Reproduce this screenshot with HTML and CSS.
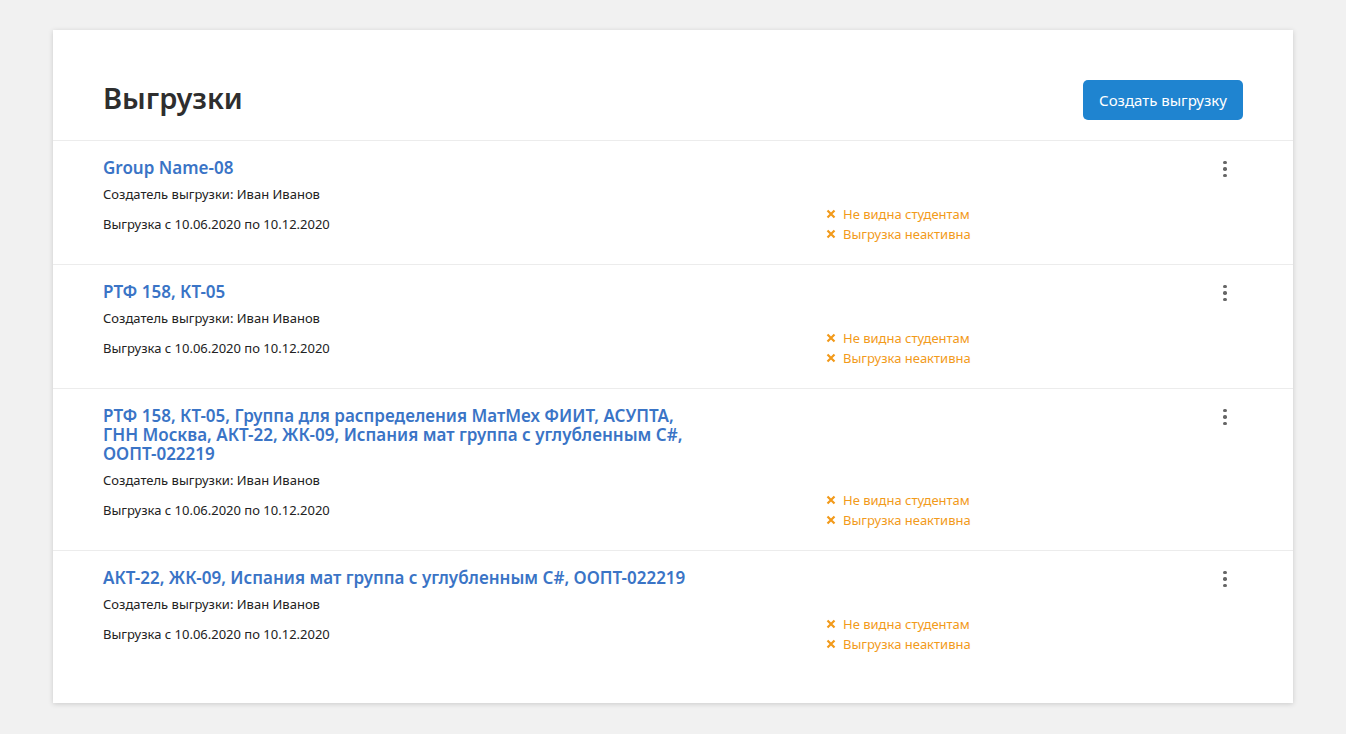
FILE: index.html
```html
<!DOCTYPE html>
<html lang="ru">
<head>
<meta charset="utf-8">
<title>Выгрузки</title>
<link rel="stylesheet" href="styles.css">
</head>
<body>
<div class="page">
  <div class="card">
    <div class="header">
      <h1 class="title">Выгрузки</h1>
      <button class="btn-primary">Создать выгрузку</button>
    </div>
    <div class="list">
      <div class="row">
        <div class="info">
          <a class="name" href="#">Group Name-08</a>
          <div class="creator">Создатель выгрузки: Иван Иванов</div>
          <div class="period">Выгрузка с 10.06.2020 по 10.12.2020</div>
        </div>
        <div class="statuses">
          <div class="status"><svg class="x" viewBox="0 0 10 10"><path d="M1.5 1.5L8.5 8.5M8.5 1.5L1.5 8.5"/></svg>Не видна студентам</div>
          <div class="status"><svg class="x" viewBox="0 0 10 10"><path d="M1.5 1.5L8.5 8.5M8.5 1.5L1.5 8.5"/></svg>Выгрузка неактивна</div>
        </div>
        <button class="kebab" aria-label="Меню"><span></span><span></span><span></span></button>
      </div>
      <div class="row">
        <div class="info">
          <a class="name" href="#">РТФ 158, КТ-05</a>
          <div class="creator">Создатель выгрузки: Иван Иванов</div>
          <div class="period">Выгрузка с 10.06.2020 по 10.12.2020</div>
        </div>
        <div class="statuses">
          <div class="status"><svg class="x" viewBox="0 0 10 10"><path d="M1.5 1.5L8.5 8.5M8.5 1.5L1.5 8.5"/></svg>Не видна студентам</div>
          <div class="status"><svg class="x" viewBox="0 0 10 10"><path d="M1.5 1.5L8.5 8.5M8.5 1.5L1.5 8.5"/></svg>Выгрузка неактивна</div>
        </div>
        <button class="kebab" aria-label="Меню"><span></span><span></span><span></span></button>
      </div>
      <div class="row">
        <div class="info">
          <a class="name" href="#">РТФ 158, КТ-05, Группа для распределения МатМех ФИИТ, АСУПТА, ГНН Москва, АКТ-22, ЖК-09, Испания мат группа с углубленным C#, ООПТ-022219</a>
          <div class="creator">Создатель выгрузки: Иван Иванов</div>
          <div class="period">Выгрузка с 10.06.2020 по 10.12.2020</div>
        </div>
        <div class="statuses">
          <div class="status"><svg class="x" viewBox="0 0 10 10"><path d="M1.5 1.5L8.5 8.5M8.5 1.5L1.5 8.5"/></svg>Не видна студентам</div>
          <div class="status"><svg class="x" viewBox="0 0 10 10"><path d="M1.5 1.5L8.5 8.5M8.5 1.5L1.5 8.5"/></svg>Выгрузка неактивна</div>
        </div>
        <button class="kebab" aria-label="Меню"><span></span><span></span><span></span></button>
      </div>
      <div class="row">
        <div class="info">
          <a class="name" href="#">АКТ-22, ЖК-09, Испания мат группа с углубленным C#, ООПТ-022219</a>
          <div class="creator">Создатель выгрузки: Иван Иванов</div>
          <div class="period">Выгрузка с 10.06.2020 по 10.12.2020</div>
        </div>
        <div class="statuses">
          <div class="status"><svg class="x" viewBox="0 0 10 10"><path d="M1.5 1.5L8.5 8.5M8.5 1.5L1.5 8.5"/></svg>Не видна студентам</div>
          <div class="status"><svg class="x" viewBox="0 0 10 10"><path d="M1.5 1.5L8.5 8.5M8.5 1.5L1.5 8.5"/></svg>Выгрузка неактивна</div>
        </div>
        <button class="kebab" aria-label="Меню"><span></span><span></span><span></span></button>
      </div>
    </div>
  </div>
</div>
</body>
</html>
```

FILE: styles.css
```css
* { box-sizing: border-box; }
html, body { margin: 0; padding: 0; }
body {
  background: #f1f1f1;
  font-family: "Noto Sans", "Open Sans", sans-serif;
  color: #222;
}
.page {
  padding: 30px 53px 30px 53px;
}
.card {
  background: #fff;
  box-shadow: 0 1px 5px rgba(0, 0, 0, 0.16);
  padding-bottom: 29px;
}
.header {
  display: flex;
  align-items: center;
  justify-content: space-between;
  padding: 50px 50px 20px 50px;
  border-bottom: 1px solid #ececec;
}
.title {
  margin: 0 0 4px 0;
  font-size: 29px;
  line-height: 36px;
  font-weight: 600;
  color: #2e2e2e;
}
.btn-primary {
  width: 160px;
  height: 40px;
  border: none;
  border-radius: 5px;
  background: #1f84d0;
  color: #fff;
  font-family: inherit;
  font-size: 15px;
  cursor: pointer;
}
.row {
  display: grid;
  grid-template-columns: 723px 1fr 36px;
  align-items: end;
  padding: 17px 50px 20px 50px;
  border-bottom: 1px solid #ececec;
}
.row:last-child { border-bottom: none; }
.info {
  align-self: start;
  max-width: 600px;
}
.name {
  display: block;
  font-size: 17px;
  line-height: 19px;
  font-weight: 600;
  color: #3a74c6;
  text-decoration: none;
}
.creator, .period {
  font-size: 13px;
  line-height: 20px;
  color: #222;
}
.creator { margin-top: 7px; }
.period { margin-top: 10px; margin-bottom: 10px; }
.statuses {
  display: flex;
  flex-direction: column;
}
.status {
  display: flex;
  align-items: center;
  font-size: 13px;
  line-height: 20px;
  color: #f29a1a;
}
.x {
  width: 10px;
  height: 10px;
  margin-right: 7px;
  fill: none;
  stroke: #f29a1a;
  stroke-width: 2.2;
}
.kebab {
  align-self: start;
  width: 36px;
  height: 22px;
  padding: 0;
  border: none;
  background: transparent;
  display: flex;
  flex-direction: column;
  align-items: center;
  justify-content: center;
  gap: 3px;
  cursor: pointer;
}
.kebab span {
  width: 3.5px;
  height: 3.5px;
  border-radius: 50%;
  background: #666;
}
```
